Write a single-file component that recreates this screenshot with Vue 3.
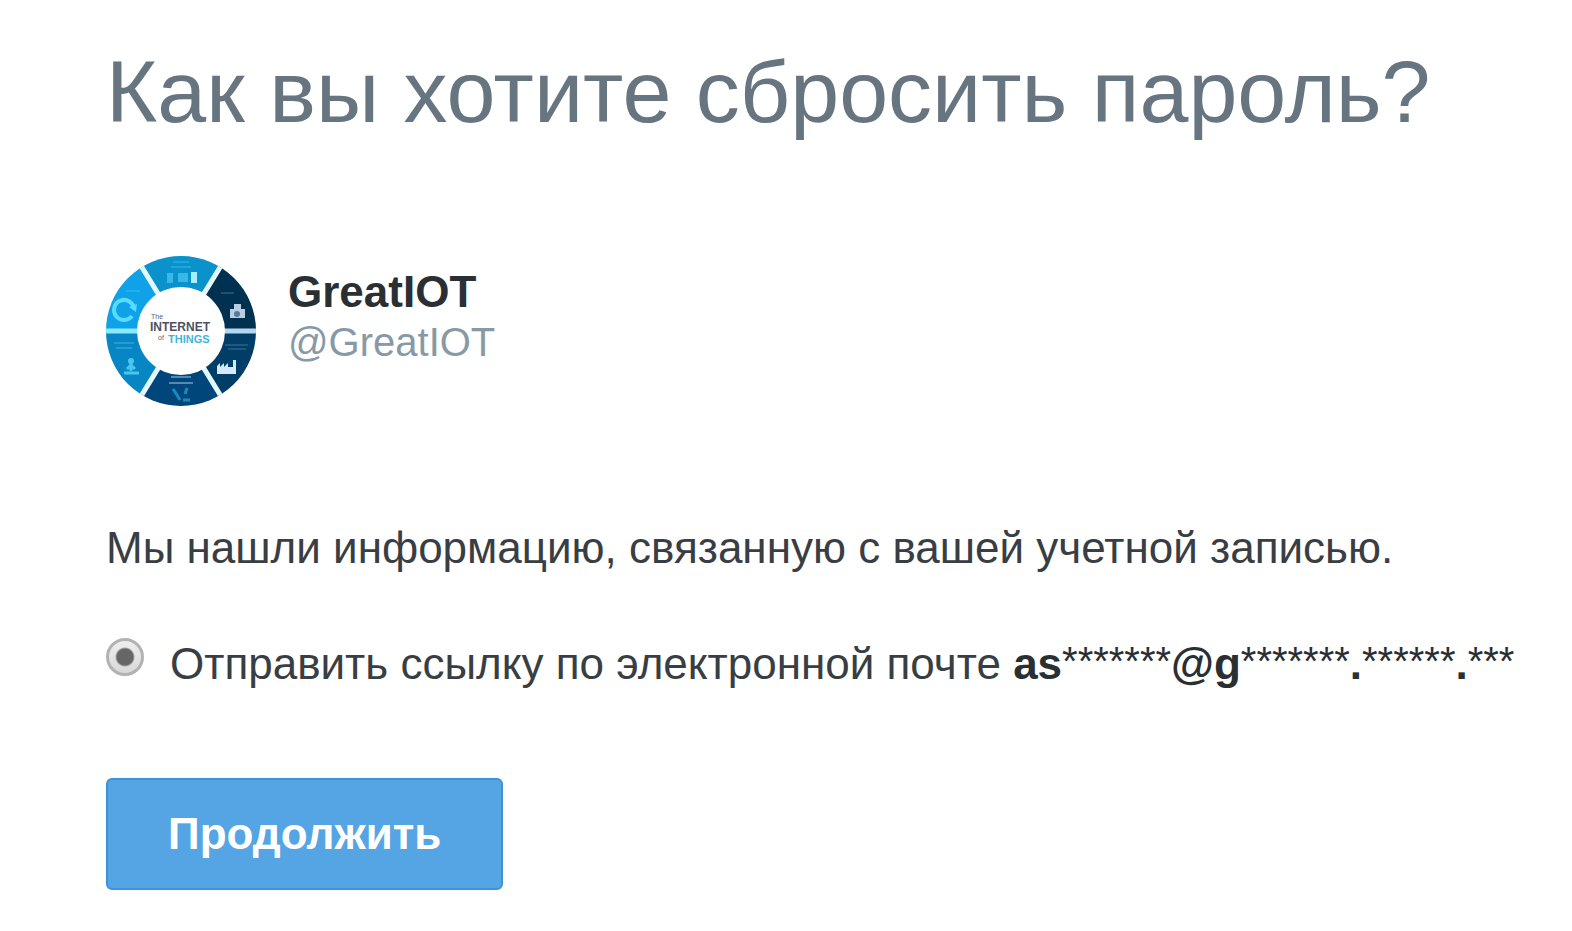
<script setup>
import { ref } from 'vue'

const method = ref('email')

// The masked address, split so that the asterisks can be set smaller than the letters.
const address = 'as*******@g*******.******.***'.match(/\*+|[^*]+/g)
</script>

<template>
  <main class="page">
    <h1>Как вы хотите сбросить пароль?</h1>
    <section class="account">
      <svg class="avatar" viewBox="0 0 150 150" role="img" aria-label="GreatIOT">
        <defs>
          <clipPath id="disc"><circle cx="75" cy="75" r="75" /></clipPath>
        </defs>
        <g clip-path="url(#disc)">
          <path d="M75 75 29 0H121Z" fill="#0992cc" />
          <path d="M75 75 121 0H150V75Z" fill="#003150" />
          <path d="M75 75H150V150H121Z" fill="#003e68" />
          <path d="M75 75 121 150H29Z" fill="#00467a" />
          <path d="M75 75 29 150H0V75Z" fill="#0786c3" />
          <path d="M75 75H0V0H29Z" fill="#0fa2e9" />
          <path d="M29 0 121 150M121 0 29 150" stroke="#e4f8ff" stroke-width="5" />
          <path d="M0 75H75" stroke="#8cebff" stroke-width="5" />
          <path d="M75 75H150" stroke="#b3d8f2" stroke-width="5" />
        </g>
        <circle cx="75" cy="75" r="44" fill="#fff" />
        <!-- top: devices -->
        <g fill="#48c5ee">
          <path d="M67 5H83V7H67ZM65 10H85V12H65Z" opacity=".4" />
          <path d="M61 17H67V27H61ZM72 17H82V26H72Z" opacity=".75" />
          <path d="M85 16H91V27H85Z" fill="#a5efff" />
        </g>
        <!-- upper left: cycle arrow -->
        <path d="M28 53A10 10 0 1 0 26 60" fill="none" stroke="#58dcff" stroke-width="4" />
        <path d="M23 51 31 48 30 56Z" fill="#58dcff" />
        <path d="M20 34H34V36H20Z" fill="#2bc0f3" opacity=".5" />
        <!-- upper right: camera -->
        <path d="M115 36H128V38H115Z" fill="#4b7188" opacity=".5" />
        <path d="M124 53H128V48H135V53H139V62H124Z" fill="#b9cfe0" />
        <circle cx="131" cy="58" r="3" fill="#557b96" />
        <!-- lower right: factory -->
        <path d="M119 88H142V90H119ZM122 92H140V94H122Z" fill="#3b7299" opacity=".5" />
        <path d="M111 118V110L114 107V111L118 107V111L122 107V111H127V104H130V118Z" fill="#d5e9f6" />
        <!-- lower left: person on a base -->
        <path d="M8 86H28V88H8ZM10 91H26V93H10Z" fill="#45b7e2" opacity=".45" />
        <path d="M25 105V115M18 117H33M21 113 25 109 29 113" fill="none" stroke="#48c6ef" stroke-width="3" />
        <circle cx="25" cy="105" r="3" fill="#48c6ef" />
        <!-- bottom: linked nodes -->
        <path d="M65 120H85V122H65ZM63 126H87V128H63Z" fill="#7eb0d0" opacity=".65" />
        <path d="M67 133 71 139 74 144M81 132 79 138M77 144H84" fill="none" stroke="#168bc0" stroke-width="3" />
        <text class="logo-small" x="45" y="63">The</text>
        <text class="logo-main" x="44" y="75">INTERNET</text>
        <text class="logo-small" x="52" y="84">of</text>
        <text class="logo-things" x="62" y="87">THINGS</text>
      </svg>
      <div class="names">
        <strong>GreatIOT</strong>
        <span>@GreatIOT</span>
      </div>
    </section>
    <form @submit.prevent>
      <p>Мы нашли информацию, связанную с вашей учетной записью.</p>
      <div class="option">
        <input id="email" v-model="method" type="radio" name="method" value="email" />
        <label for="email">Отправить ссылку по электронной почте <b><span
          v-for="(part, i) in address" :key="i" :class="{ mask: part.startsWith('*') }">{{ part }}</span></b></label>
      </div>
      <button type="submit">Продолжить</button>
    </form>
  </main>
</template>

<style scoped>
.page {
  padding: 40px 40px 40px 106px;
  font: 44px/52px "Liberation Sans", Arial, sans-serif;
  color: #383e43;
}
h1 {
  margin: 0;
  font-size: 88px;
  line-height: 104px;
  font-weight: 400;
  color: #66757f;
  white-space: nowrap;
}
.account { display: flex; gap: 32px; margin-top: 112px; }
.avatar { width: 150px; height: 150px; }
.logo-small { font-size: 7px; fill: #60606c; }
.logo-main { font-size: 12px; font-weight: 700; fill: #505064; }
.logo-things { font-size: 11px; font-weight: 700; fill: #40b5dc; }
.names { display: flex; flex-direction: column; padding-top: 10px; }
.names strong { color: #292f33; }
.names span { font-size: 40px; line-height: 48px; color: #8899a6; }
p { margin: 116px 0 0; white-space: nowrap; }
.option { display: flex; gap: 26px; margin-top: 64px; white-space: nowrap; }
b { color: #292f33; }
.mask { font-size: 40px; font-weight: 400; line-height: 1; vertical-align: 4px; }
input {
  appearance: none;
  flex: none;
  width: 38px;
  height: 38px;
  margin: 0;
  border: 3px solid #b2b2b2;
  border-radius: 50%;
  background: linear-gradient(#eee, #d9d9d9);
}
input:checked {
  background: radial-gradient(circle, #666 0 8px, transparent 10px), linear-gradient(#eee, #d9d9d9);
}
button {
  display: block;
  margin-top: 88px;
  padding: 28px 60px;
  background: #55a5e4;
  color: #fff;
  font: inherit;
  font-weight: 700;
  border: 2px solid #3b94d9;
  border-radius: 6px;
}
</style>
